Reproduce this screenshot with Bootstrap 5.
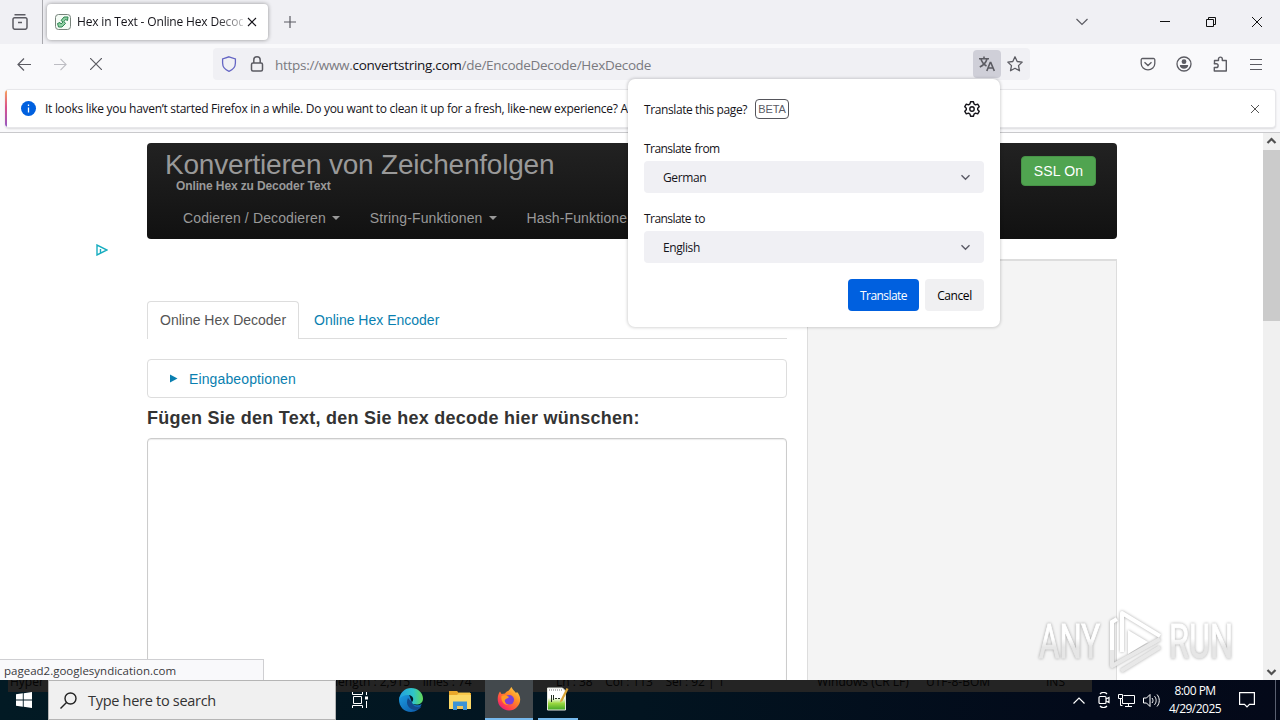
<!DOCTYPE html>
<html lang="de">
<head>
    <meta charset="UTF-8">
    <meta name="viewport" content="width=device-width, initial-scale=1.0">
    <title>Hex in Text - Online Hex Decoder</title>

    <!-- Bootstrap CSS -->
    <link href="https://cdn.jsdelivr.net/npm/bootstrap@5.3.0/dist/css/bootstrap.min.css" rel="stylesheet">

    <style>
        html, body {
            width: 1280px;
            height: 720px;
            overflow: hidden;
        }

        body {
            font-family: "Open Sans", "Noto Sans", sans-serif;
            font-size: 12px;
            line-height: 16px;
            color: #15141a;
            background: #fff;
        }

        svg {
            display: block;
            flex: none;
            fill: none;
        }

        svg:not([stroke]) {
            stroke: currentColor;
        }

        span, a, h1, h2 {
            white-space: nowrap;
        }

        /* Tab strip */
        .tab-strip {
            height: 44px;
            background: #f0f0f4;
            color: #5b5b62;
        }

        .view-btn {
            width: 43px;
            height: 44px;
            border-right: 1px solid #a9a9ae;
            padding-left: 12px;
        }

        .browser-tab {
            width: 221px;
            height: 36px;
            margin-left: 4px;
            padding-left: 8px;
            background: #fff;
            border-radius: 4px;
            box-shadow: 0 0 4px rgba(0, 0, 0, .4);
            color: #15141a;
        }

        .tab-label {
            width: 166px;
            margin-left: 6px;
            overflow: hidden;
            letter-spacing: -.16px;
            -webkit-mask-image: linear-gradient(90deg, #000 138px, transparent 176px);
            mask-image: linear-gradient(90deg, #000 138px, transparent 176px);
        }

        .new-tab {
            margin-left: 16px;
        }

        /* Window buttons */
        .win-btns {
            gap: 36px;
            padding-right: 18px;
        }

        .tabs-chevron {
            margin-right: 36px;
        }

        /* Toolbar */
        .tool-bar {
            height: 41px;
            padding-bottom: 1px;
            background: #f9f9fb;
            color: #5b5b62;
        }

        .nav-btns {
            gap: 23px;
            width: 213px;
            padding-left: 17px;
        }

        .url-bar {
            width: 817px;
            height: 32px;
            padding-left: 8px;
            background: #f0f0f4;
            border-radius: 4px;
        }

        .url-text {
            margin-left: 10px;
            width: 698px;
            padding-top: 1px;
            font-size: 13.5px;
            letter-spacing: -.29px;
            color: #7a7a80;
        }

        .url-text b {
            font-weight: 400;
            color: #15141a;
        }

        .translate-btn {
            width: 28px;
            height: 28px;
            border-radius: 4px;
            background: #cfcfd8;
        }

        .tool-icons {
            gap: 20px;
            margin-right: 18px;
        }

        /* Notification */
        .notice-wrap {
            height: 48px;
            padding: 4px 4px 0 5px;
            background: #f9f9fb;
            border-bottom: 1px solid #c9c9cc;
        }

        .notice {
            height: 39px;
            padding-right: 16px;
            background: #fff;
            border: 1px solid #e7e7ea;
            border-left: 0;
            border-radius: 4px;
            box-shadow: 0 1px 2px rgba(0, 0, 0, .12);
            overflow: hidden;
        }

        .notice-edge {
            width: 2px;
            height: 38px;
            margin-right: 14px;
            background: linear-gradient(#f7a45c, #d9508c 45%, #9059c4);
        }

        .notice-text {
            letter-spacing: -.29px;
            margin-left: 8px;
        }

        /* Page */
        .page-view {
            height: 547px;
            overflow: hidden;
            font-family: "Liberation Sans", Arial, sans-serif;
            font-size: 14px;
            line-height: 20px;
        }

        .page-main {
            width: 970px;
            margin-left: 147px;
        }

        .site-head {
            height: 96px;
            margin-top: 10px;
            padding-left: 18px;
            border-radius: 4px;
            background: linear-gradient(#222, #111);
            color: #999;
        }

        .site-title {
            font-size: 28px;
            line-height: 34px;
            margin: 5px 0 0;
            font-weight: 400;
            letter-spacing: -.2px;
            height: 31px;
        }

        .site-sub {
            font-size: 12px;
            line-height: 14px;
            padding-left: 11px;
            font-weight: 700;
            letter-spacing: -.12px;
        }

        .site-nav {
            margin-top: 15px;
            padding-left: 18px;
            gap: 30px;
            letter-spacing: .13px;
        }

        .drop-caret {
            border: 4px solid transparent;
            border-top-color: #999;
            border-bottom: 0;
            margin-left: 6px;
        }

        .ssl-btn {
            width: 75px;
            height: 30px;
            margin: 13px 21px 0 0;
            border: 1px solid #479347;
            border-radius: 4px;
            background: #50a450;
            color: #fff;
            letter-spacing: .2px;
            line-height: 28px;
            text-align: center;
        }

        .side-box {
            width: 310px;
            height: 440px;
            margin-top: 20px;
            background: #f4f4f4;
            border: 1px solid #ddd;
            border-top-width: 2px;
        }

        .left-col {
            width: 640px;
        }

        .hex-tabs {
            height: 38px;
            margin-top: 62px;
            border-bottom: 1px solid #ddd;
        }

        .hex-tab {
            height: 38px;
            line-height: 38px;
            padding: 0 15px;
            color: #0a7fb0;
            text-decoration: none;
        }

        .hex-tab.current {
            width: 152px;
            padding: 0 0 0 12px;
            line-height: 36px;
            background: #fff;
            color: #555;
            border: 1px solid #ddd;
            border-bottom: 0;
            border-radius: 4px 4px 0 0;
        }

        .options-box {
            height: 39px;
            margin-top: 20px;
            padding-left: 21px;
            gap: 11px;
            border: 1px solid #ddd;
            border-radius: 4px;
            color: #0a7fb0;
            letter-spacing: .12px;
        }

        .hex-prompt {
            margin: 9px 0 0;
            font-size: 18px;
            line-height: 22px;
            font-weight: 700;
            letter-spacing: .265px;
            color: #333;
        }

        .hex-input {
            height: 300px;
            margin-top: 9px;
            border: 1px solid #ccc;
            border-radius: 4px;
            box-shadow: inset 0 1px 1px rgba(0, 0, 0, .08);
        }

        .scroll-rail {
            width: 17px;
            height: 547px;
            background: #f0f0f0;
            color: #505050;
        }

        .scroll-thumb {
            height: 171px;
            background: #cbcbcb;
        }

        /* Translate panel */
        .translate-panel {
            position: absolute;
            left: 628px;
            top: 79px;
            width: 372px;
            height: 248px;
            padding: 16px;
            background: #fff;
            border-radius: 7px;
            box-shadow: 0 0 3px 1px rgba(0, 0, 0, .16);
            letter-spacing: -.4px;
        }

        .panel-head {
            height: 28px;
        }

        .panel-head span {
            padding-top: 2px;
        }

        .panel-label {
            margin: 18px 0 4px;
            letter-spacing: -.55px;
            word-spacing: 1px;
        }

        .beta-tag {
            width: 34px;
            height: 20px;
            margin-left: 8px;
            border: 1px solid #55555b;
            border-radius: 4px;
            color: #5b5b66;
            font-family: "Liberation Sans", Arial, sans-serif;
            font-size: 11px;
            line-height: 19px;
            text-align: center;
            letter-spacing: -.1px;
        }

        .lang-select {
            height: 32px;
            padding: 0 13px 0 19px;
            background: #f0f0f4;
            border-radius: 4px;
            line-height: 18px;
        }

        .lang-select span {
            padding-top: 2px;
        }

        .panel-btns {
            gap: 6px;
        }

        .panel-btn {
            height: 32px;
            border-radius: 4px;
            background: #f0f0f2;
            border: 0;
            padding: 2px 0 0;
            letter-spacing: inherit;
        }

        .panel-btn.go {
            width: 71px;
            background: #0060df;
            color: #fff;
            letter-spacing: -.55px;
        }

        .panel-btn.stop {
            width: 59px;
        }

        /* Status popup, ad marker and watermark */
        .status-pop {
            position: absolute;
            left: 0;
            top: 659px;
            width: 264px;
            height: 21px;
            padding: 3px 0 0 4px;
            background: #f9f9fb;
            border: 1px solid #cfcfd2;
            border-width: 1px 1px 0 0;
            font-size: 11.5px;
            line-height: 15px;
            color: #3a3a40;
        }

        .ad-marker {
            position: absolute;
            left: 96px;
            top: 244px;
        }

        .watermark {
            position: absolute;
            left: 1030px;
            top: 604px;
            filter: drop-shadow(0 0 1.5px rgba(0, 0, 0, .34));
        }

        /* Taskbar */
        .task-bar {
            position: relative;
            height: 40px;
            background: linear-gradient(90deg, #021a24, #021420 50%, #030a1a 85%, #040919);
            color: #fff;
        }

        .ghost-status {
            position: absolute;
            left: 8px;
            top: 0;
            width: 1084px;
            height: 12px;
            overflow: hidden;
            background: #242424;
            color: #050505;
        }

        .ghost-status span {
            position: absolute;
            top: -6px;
            white-space: pre;
        }

        .task-item {
            position: relative;
            z-index: 1;
            width: 49px;
            height: 40px;
            display: flex;
            align-items: center;
            justify-content: center;
        }

        .search-box {
            width: 288px;
            justify-content: flex-start;
            background: #f0f0f0;
            border: 1px solid #b5b5b5;
            color: #333;
            font-size: 14.5px;
            padding-left: 11px;
        }

        .search-box span {
            margin-left: 11px;
            padding-top: 1px;
            letter-spacing: -.29px;
        }

        .task-item.open {
            width: 48px;
            border-bottom: 2px solid #76b9ed;
        }

        .task-item.active-app {
            background: #43494d;
        }

        .task-item.back-app {
            width: 40px;
            margin-left: 5px;
        }

        .clock {
            width: 54px;
            margin: 0 17px 0 8px;
            line-height: 18px;
            text-align: center;
            letter-spacing: -.52px;
        }

        .peek-edge {
            width: 5px;
            height: 40px;
            margin-left: 20px;
            border-left: 1px solid #5a6070;
        }
    </style>
</head>
<body>
    <!-- Tab strip -->
    <div class="tab-strip d-flex align-items-center">
        <div class="view-btn d-flex align-items-center">
            <svg width="16" height="16" viewBox="0 0 16 16" stroke-width="1.5"><path d="M2.5.8h11M2.5 3.8h11a1.5 1.5 0 0 1 1.5 1.5v8a2 2 0 0 1-2 2H3a2 2 0 0 1-2-2v-8a1.5 1.5 0 0 1 1.5-1.5M6 8.5h4"/></svg>
        </div>
        <div class="browser-tab d-flex align-items-center">
            <svg width="16" height="16" viewBox="0 0 16 16"><rect x=".5" y=".5" width="15" height="15" rx="3" fill="#f4fbf5" stroke="#77837b"/><path d="M2.500 9.500 5 8.500l1 1.500 2-2-2-1.500L9 3h4l-.5 3.500-2-1-1.500 2 1.500 2L7 13H3.500z" fill="#8fcfa3" stroke="#2c8550"/></svg>
            <span class="tab-label">Hex in Text - Online Hex Decod</span>
            <svg width="10" height="10" viewBox="0 0 10 10" stroke-width="1.1" class="ms-1"><path d="m1 1 8 8M9 1 1 9"/></svg>
        </div>
        <svg width="12" height="12" viewBox="0 0 12 12" stroke-width="1.2" class="new-tab"><path d="M6 0v12M0 6h12"/></svg>
        <div class="win-btns d-flex align-items-center ms-auto">
            <svg width="12" height="8" viewBox="0 0 12 8" stroke-width="1.2" class="tabs-chevron"><path d="m.5 1 5.5 5.500L11.500 1"/></svg>
            <svg width="10" height="10" viewBox="0 0 10 10" stroke="#111"><path d="M0 4.500h10"/></svg>
            <svg width="10" height="10" viewBox="0 0 10 10" stroke="#111"><path d="M.5 2.500h7v7h-7zM2.500 2.500v-2h7v7h-2"/></svg>
            <svg width="10" height="10" viewBox="0 0 10 10" stroke="#111"><path d="m0 0 10 10M10 0 0 10"/></svg>
        </div>
    </div>

    <!-- Toolbar -->
    <div class="tool-bar d-flex align-items-center">
        <div class="nav-btns d-flex align-items-center">
            <svg width="14" height="14" viewBox="0 0 14 14" stroke-width="1.2"><path d="M14 7.500H1M7 1.500l-6 6 6 6"/></svg>
            <svg width="13" height="14" viewBox="0 0 14 14" stroke-width="1.2" stroke="#bdbdc3"><path d="M0 7.500h13M7 1.500l6 6-6 6"/></svg>
            <svg width="12" height="12" viewBox="0 0 12 12" stroke-width="1.2"><path d="m0 0 12 12M12 0 0 12"/></svg>
        </div>
        <div class="url-bar d-flex align-items-center">
            <svg width="16" height="16" viewBox="0 0 16 16" stroke="#6465c4" stroke-width="1.3"><path d="M8 .8 14.400 3v4c0 4-3 7-6.400 8.300C4.600 14 1.600 11 1.600 7V3z"/></svg>
            <svg width="16" height="16" viewBox="0 0 16 16" stroke-width="1.5" style="margin-left:12px"><rect x="2.500" y="7" width="11" height="8" rx="1.5"/><path d="M4.800 7V4a3.200 3.200 0 0 1 6.400 0v3"/></svg>
            <span class="url-text">https://www.<b>convertstring.com</b>/de/EncodeDecode/HexDecode</span>
            <div class="translate-btn d-flex align-items-center justify-content-center">
                <svg width="16" height="16" viewBox="0 0 16 16" stroke-width="1.6"><path d="M0 2.700h10M5 .5v2M2 3c.8 3 3 5.500 5.500 7M8 3C7 6.500 4 9.500.8 11M7.800 15l3.400-8.500h.6L15.300 15M9 12h5"/></svg>
            </div>
            <svg width="16" height="16" viewBox="0 0 16 16" stroke-width="1.3" stroke-linejoin="round" style="margin-left:6px"><path d="m8 .8 2.200 4.700 5 .6-3.700 3.500 1 5.200L8 12.300l-4.500 2.500 1-5.200L.8 6.100l5-.6z"/></svg>
        </div>
        <div class="tool-icons d-flex align-items-center ms-auto">
            <svg width="16" height="16" viewBox="0 0 16 16" stroke-width="1.3"><path d="M2.500 2.500h11a1.300 1.300 0 0 1 1.300 1.300V7.500a6.800 6.300 0 0 1-13.600 0V3.800a1.300 1.300 0 0 1 1.300-1.300zM4.500 6.200 8 9.500l3.500-3.300"/></svg>
            <svg width="16" height="16" viewBox="0 0 16 16" stroke-width="1.3"><circle cx="8" cy="8" r="7"/><circle cx="8" cy="5.700" r="2.400" fill="currentColor" stroke="none"/><path d="M3.800 9h8.400c0 2.500-2 3.700-4.200 3.700S3.800 11.500 3.800 9z" fill="currentColor" stroke="none"/></svg>
            <svg width="16" height="16" viewBox="-1 0 16 16" stroke-width="1.4" stroke-linejoin="round"><path d="M1.500 7V4.500h4V3a1.900 1.900 0 0 1 3.800 0v1.500h4V15h-12v-3.500h2a1.800 1.800 0 0 0 0-3.700h-2z"/></svg>
            <svg width="14" height="12" viewBox="-2 0 14 12"><path d="M0 1.500h12M0 6.500h12M0 11.500h12"/></svg>
        </div>
    </div>

    <!-- Notification -->
    <div class="notice-wrap">
        <div class="notice d-flex align-items-center">
            <div class="notice-edge"></div>
            <svg width="16" height="16" viewBox="0 0 16 16"><circle cx="7.500" cy="7.500" r="7.500" fill="#0060df" stroke="none"/><path d="M7.500 6.500v5M7.500 3.500V5" stroke="#fff" stroke-width="1.3"/></svg>
            <span class="notice-text">It looks like you haven’t started Firefox in a while. Do you want to clean it up for a fresh, like-new experience? A</span>
            <svg width="8" height="8" viewBox="0 0 8 8" class="ms-auto" stroke="#555"><path d="m0 0 8 8M8 0 0 8"/></svg>
        </div>
    </div>

    <!-- Page -->
    <div class="page-view d-flex">
        <div class="page-main">
            <div class="site-head d-flex justify-content-between">
                <div>
                    <h1 class="site-title">Konvertieren von Zeichenfolgen</h1>
                    <div class="site-sub">Online Hex zu Decoder Text</div>
                    <div class="site-nav d-flex">
                        <span class="d-flex align-items-center">Codieren / Decodieren<i class="drop-caret"></i></span>
                        <span class="d-flex align-items-center">String-Funktionen<i class="drop-caret"></i></span>
                        <span>Hash-Funktione</span>
                    </div>
                </div>
                <div class="ssl-btn">SSL On</div>
            </div>
            <div class="d-flex justify-content-between">
                <div class="left-col">
                    <div class="hex-tabs d-flex">
                        <a class="hex-tab current">Online Hex Decoder</a>
                        <a class="hex-tab">Online Hex Encoder</a>
                    </div>
                    <div class="options-box d-flex align-items-center">
                        <svg width="9" height="10" viewBox="0 0 9 10"><path d="M1 .5v8L8.500 4.500z" fill="currentColor" stroke="none"/></svg>
                        <span>Eingabeoptionen</span>
                    </div>
                    <h2 class="hex-prompt">Fügen Sie den Text, den Sie hex decode hier wünschen:</h2>
                    <div class="hex-input"></div>
                </div>
                <div class="side-box"></div>
            </div>
        </div>
        <div class="scroll-rail ms-auto d-flex flex-column">
            <svg width="17" height="17" viewBox="0 0 17 17" stroke-width="2.2"><path d="m4.500 10 4-4 4 4"/></svg>
            <div class="scroll-thumb"></div>
            <svg width="17" height="17" viewBox="0 0 17 17" stroke-width="2.2" class="mt-auto"><path d="m4.500 7 4 4 4-4"/></svg>
        </div>
    </div>

    <!-- Taskbar -->
    <div class="task-bar d-flex">
        <div class="ghost-status">
            <span style="left:2px">Hyper</span>
            <span style="left:327px">length : 2,915    lines : 74</span>
            <span style="left:548px">Ln : 38    Col : 113    Sel : 92 | 1</span>
            <span style="left:809px">Windows (CR LF)</span>
            <span style="left:918px">UTF-8-BOM</span>
            <span style="left:1038px">INS</span>
        </div>
        <div class="task-item" style="width:48px">
            <svg width="16" height="16" viewBox="0 0 16 16" stroke="none"><path d="M0 2.200 6.800 1.300V7.500H0zM7.700 1.200 16 0v7.500H7.700zM0 8.400h6.800v6.300L0 13.800zM7.700 8.400H16V16l-8.300-1.200z" fill="#fff"/></svg>
        </div>
        <div class="task-item search-box">
            <svg width="17" height="17" viewBox="0 0 17 17" stroke-width="1.4" stroke="#222"><circle cx="10.500" cy="6.500" r="5.500"/><path d="M6.500 10.500.5 16.500"/></svg>
            <span>Type here to search</span>
        </div>
        <div class="task-item" style="width:48px">
            <svg width="16" height="16" viewBox="0 0 16 16" stroke="#fff"><path d="M.5 0v2.500h10V0M.5 16v-2.500h10V16M1.500 4.500h8v7h-8zM14.500 0v3M14.500 9v7"/><path d="M13 4.500h3v3h-3z" fill="#fff" stroke="none"/></svg>
        </div>
        <div class="task-item" style="width:53px">
            <svg width="24" height="24" viewBox="0 0 24 24" stroke="none">
                <defs>
                    <linearGradient id="edgeTop" x1="0" x2="1"><stop offset="0" stop-color="#229fe0"/><stop offset=".6" stop-color="#2fc5c8"/><stop offset="1" stop-color="#63d957"/></linearGradient>
                    <linearGradient id="edgeLow" x1="0" x2="1" y2="1"><stop offset="0" stop-color="#1b9de2"/><stop offset="1" stop-color="#0c55a5"/></linearGradient>
                </defs>
                <path d="M0 11.500C1 6 6 5.500 10 6.500l3 8c1 3 6 3.500 9.700 1.500C21 21 17 24 12 24 5 24 0 18.500 0 11.500z" fill="url(#edgeLow)"/>
                <path d="M9 10c-3 6 1 12 8 12 2 0 4-1.500 5.500-3.500-4 1.500-8.500.5-9.500-4z" fill="#134a8c"/>
                <path d="M0 11.500C1 4.500 6 0 12 0c7 0 12 5 12 10.500 0 4-3 6-6.500 6-3 0-4.500-1-4.500-2s1.200-1.500 1.200-3.500c0-2-2.200-4-5.200-4C5 7 1.500 8.500 0 11.500z" fill="url(#edgeTop)"/>
            </svg>
        </div>
        <div class="task-item" style="width:46px">
            <svg width="22" height="19" viewBox="0 0 22 19" stroke="none"><path d="M0 0h8l2 2h12v16H0z" fill="#e9a72a"/><path d="M0 4h22v14H0z" fill="#fbd866"/><path d="M10 1.500h11V4H8z" fill="#f9c84a"/><path d="M4 10.500h14V19h-4v-4H8v4H4z" fill="#3c93d4"/><path d="M8 15h6v3H8z" fill="#f0c65a"/></svg>
        </div>
        <div class="task-item open active-app" style="margin-left:2px">
            <svg width="24" height="24" viewBox="0 0 24 24" stroke="none">
                <defs><linearGradient id="foxFill" x1="1" y1="0" x2=".2" y2="1"><stop offset="0" stop-color="#ffe14d"/><stop offset=".45" stop-color="#ff8a26"/><stop offset=".8" stop-color="#ff3f4e"/><stop offset="1" stop-color="#e31587"/></linearGradient></defs>
                <path d="M3 4.500 4.500 7 8 6.500c1-1.500 2-2.200 3.500-2.700C13 2.500 13.500 1 14.500 0c1 3 3 3.500 4.500 6l1-1c2 2 3.200 4.500 3.200 7.500A11.300 11.300 0 0 1 12 23.500 11.300 11.300 0 0 1 .7 12C.7 9 1.500 6.500 3 4.500z" fill="url(#foxFill)"/>
                <circle cx="12.300" cy="12.800" r="4.800" fill="#7a40d8"/>
                <path d="M4.500 9C7 8 9 8 12 10c-1 1.800-3.500 1.500-4.200 3-.5 2 1.200 4.500 4.200 4.800-5 1-8.500-4-7.500-8.800z" fill="#ff9b24"/>
            </svg>
        </div>
        <div class="task-item open back-app">
            <svg width="22" height="24" viewBox="0 0 22 24" stroke="none">
                <defs><linearGradient id="padFill" x2="0" y2="1"><stop offset=".45" stop-color="#fff"/><stop offset=".7" stop-color="#9ad83f"/><stop offset="1" stop-color="#3fa527"/></linearGradient></defs>
                <path d="M.5 1h15l3 3v19H.5z" fill="url(#padFill)" stroke="#e3e6df"/><path d="M2 3h13" stroke="#777" stroke-dasharray="1 1"/><path d="M4.500 8v7M6.500 8v5M8 11.500h2M11 11.500h2" stroke="#263022"/><path d="m13.500 13 6-12 2 1-6 12-2.500 1.500z" fill="#d8a437"/>
            </svg>
        </div>
        <div class="d-flex align-items-center ms-auto">
            <svg width="12" height="7" viewBox="0 0 12 7" stroke-width="1.2" style="margin-right:13px"><path d="M.5 6.500 6 1l5.500 5.500"/></svg>
            <svg width="12" height="16" viewBox="0 0 12 16" stroke-width="1.2" style="margin-right:8px"><rect x="1" y="4.500" width="7" height="7" rx="1"/><path d="m8 7 3-1.500v5L8 9M2 2C4-.2 7-.2 9 2M2 14c2 2.200 5 2.200 7 0"/></svg>
            <svg width="17" height="15" viewBox="0 0 17 15" style="margin-right:8px"><path d="M5.500 2.500h11v8H4.500V6M7 13.500h7M10.500 10.500v3M.5 1.500h4v4h-4zM2.500 5.500v7h2"/></svg>
            <svg width="17" height="15" viewBox="0 0 17 15"><path d="M.5 5h3L7 1.500v12L3.500 10h-3zM9 5c1.300 1.500 1.300 3.500 0 5M11.500 3.200c2.200 2.500 2.200 6 0 8.600M14 1.500c3 3.500 3 8.500 0 12"/></svg>
            <div class="clock">8:00 PM<br>4/29/2025</div>
            <svg width="16" height="16" viewBox="0 0 16 16" stroke-width="1.2"><path d="M.6.600h14.800v11.800H10.500L8 15l-2.500-2.600H.6z"/></svg>
            <div class="peek-edge"></div>
        </div>
    </div>

    <!-- Translate panel -->
    <div class="translate-panel">
        <div class="panel-head d-flex align-items-center">
            <span>Translate this page?</span>
            <div class="beta-tag">BETA</div>
            <svg width="16" height="16" viewBox="0 0 16 16" stroke-width="1.4" stroke-linejoin="round" class="ms-auto me-1"><path d="M6.500.8h3l.5 2.100 1.500.9 2.200-.7 1.500 2.600L13.700 7.200v1.600l1.500 1.500-1.500 2.600-2.200-.7-1.500.9-.5 2.100h-3L6 13.100l-1.500-.9-2.200.7-1.500-2.600 1.500-1.500V7.200L.8 5.700l1.500-2.600 2.200.7L6 2.900z"/><circle cx="8" cy="8" r="2.200"/></svg>
        </div>
        <div class="panel-label">Translate from</div>
        <div class="lang-select d-flex align-items-center justify-content-between"><span>German</span>
            <svg width="11" height="7" viewBox="0 0 11 7" stroke-width="1.4" stroke="#5b5b66"><path d="m1.500 1.200 4 4 4-4"/></svg>
        </div>
        <div class="panel-label">Translate to</div>
        <div class="lang-select d-flex align-items-center justify-content-between"><span>English</span>
            <svg width="11" height="7" viewBox="0 0 11 7" stroke-width="1.4" stroke="#5b5b66"><path d="m1.500 1.200 4 4 4-4"/></svg>
        </div>
        <div class="panel-btns d-flex justify-content-end mt-3">
            <button class="panel-btn go">Translate</button>
            <button class="panel-btn stop">Cancel</button>
        </div>
    </div>

    <div class="status-pop"><span>pagead2.googlesyndication.com</span></div>

    <!-- Ad marker -->
    <svg class="ad-marker" width="12" height="12" viewBox="0 0 12 12" stroke="#18adc0" stroke-width="1.4"><path d="M1 1v10l10-5zM4.500 5v4"/></svg>

    <!-- Watermark -->
    <svg class="watermark" width="210" height="70" viewBox="0 0 210 70" stroke="none">
        <defs><linearGradient id="markFill" x2="0" y2="1"><stop offset=".45" stop-color="#fff"/><stop offset=".6" stop-color="#e6e6e6"/></linearGradient></defs>
        <g font-family="Roboto, sans-serif" font-size="49" fill="url(#markFill)" stroke="url(#markFill)">
            <text x="9" y="54" textLength="61" lengthAdjust="spacingAndGlyphs">ANY</text>
            <text x="139" y="54" textLength="64" lengthAdjust="spacingAndGlyphs">RUN</text>
        </g>
        <path d="M92 48V9l38 23" stroke="#fff" stroke-width="4" stroke-linejoin="round"/>
        <path d="M82 48V18l5-3" stroke="#fff" stroke-width="4"/>
        <path d="M82 46v16l48-27M91 67l39-24" stroke="#e8e8e8" stroke-width="4" stroke-linejoin="round"/>
        <path d="M98 26v24l20-12z" fill="#fff"/>
    </svg>

    <!-- Bootstrap JS -->
    <script src="https://cdn.jsdelivr.net/npm/bootstrap@5.3.0/dist/js/bootstrap.bundle.min.js"></script>
</body>
</html>
